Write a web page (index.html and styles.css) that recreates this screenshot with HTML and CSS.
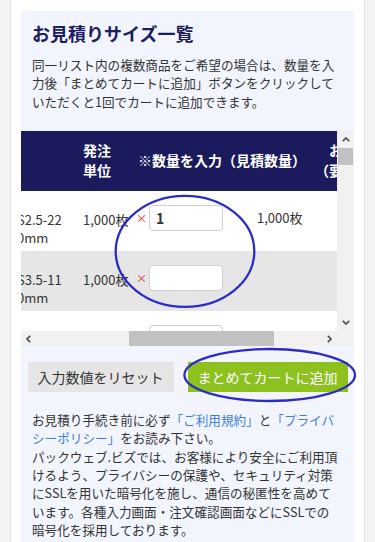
FILE: index.html
```html
<!DOCTYPE html>
<html lang="ja">
<head>
<meta charset="utf-8">
<title>お見積りサイズ一覧</title>
<link rel="stylesheet" href="styles.css">
</head>
<body>
<div class="page">
  <section class="panel">
    <h2 class="title txt">お見積りサイズ一覧</h2>
    <p class="lead txt">同一リスト内の複数商品をご希望の場合は、数量を入力後「まとめてカートに追加」ボタンをクリックしていただくと1回でカートに追加できます。</p>

    <div class="table-box">
      <div class="viewport">
        <table class="sizes">
          <colgroup>
            <col class="c-size"><col class="c-unit"><col class="c-qty"><col class="c-more">
          </colgroup>
          <thead>
            <tr>
              <th></th>
              <th>発注<br>単位</th>
              <th class="h-qty">※数量を入力（見積数量）</th>
              <th class="h-more">お届け<br>（要確認）</th>
            </tr>
          </thead>
          <tbody>
            <tr>
              <td class="size">S2.5-220mm</td>
              <td class="unit">1,000枚</td>
              <td class="qty"><div class="qty-in"><span class="times">×</span><input class="num" type="text" value="1"><span class="total">1,000枚</span></div></td>
              <td></td>
            </tr>
            <tr class="alt">
              <td class="size">S3.5-110mm</td>
              <td class="unit">1,000枚</td>
              <td class="qty"><div class="qty-in"><span class="times">×</span><input class="num" type="text" value=""></div></td>
              <td></td>
            </tr>
            <tr>
              <td class="size"></td>
              <td class="unit"></td>
              <td class="qty"><div class="qty-in"><span class="times">×</span><input class="num" type="text" value=""></div></td>
              <td></td>
            </tr>
          </tbody>
        </table>
      </div>
      <div class="vbar">
        <div class="sb-btn"><svg width="8" height="5" viewBox="0 0 8 5"><polyline points="0.8,4.2 4,1 7.2,4.2" /></svg></div>
        <div class="vthumb"></div>
        <div class="sb-fill"></div>
        <div class="sb-btn"><svg width="8" height="5" viewBox="0 0 8 5"><polyline points="0.8,0.8 4,4 7.2,0.8" /></svg></div>
      </div>
      <div class="hbar">
        <div class="sb-btn h"><svg width="5" height="8" viewBox="0 0 5 8"><polyline points="4.2,0.8 1,4 4.2,7.2" /></svg></div>
        <div class="hthumb"></div>
        <div class="sb-fill"></div>
        <div class="sb-btn h"><svg width="5" height="8" viewBox="0 0 5 8"><polyline points="0.8,0.8 4,4 0.8,7.2" /></svg></div>
      </div>
      <div class="corner"></div>
    </div>

    <div class="actions">
      <button class="btn reset" type="button">入力数値をリセット</button>
      <button class="btn add" type="button">まとめてカートに追加</button>
    </div>

    <p class="note txt">お見積り手続き前に必ず<a href="#">「ご利用規約」</a>と<a href="#">「プライバシーポリシー」</a>をお読み下さい。<br>パックウェブ.ビズでは、お客様により安全にご利用頂けるよう、プライバシーの保護や、セキュリティ対策にSSLを用いた暗号化を施し、通信の秘匿性を高めています。各種入力画面・注文確認画面などにSSLでの暗号化を採用しております。</p>
  </section>
</div>

<svg class="marks" width="375" height="542" viewBox="0 0 375 542">
  <ellipse cx="185" cy="251.3" rx="69.3" ry="55.5" />
  <ellipse cx="269.7" cy="375" rx="85.3" ry="26" />
</svg>
</body>
</html>
```

FILE: styles.css
```css
html, body {
  margin: 0;
  padding: 0;
}

body {
  background: #f4f4f4;
  font-family: "Noto Sans CJK JP", "Noto Sans", sans-serif;
  color: #333;
  position: relative;
  height: 542px;
  overflow: hidden;
}

.page {
  margin: 0 10px;
  height: 542px;
  box-sizing: border-box;
  padding: 11px 10px 0;
  background: #fff;
  border-left: 1px solid #e3e3e3;
  border-right: 1px solid #e3e3e3;
  overflow: hidden;
}

.panel {
  background: #f2f5fe;
  height: 531px;
  padding-top: 9px;
  box-sizing: border-box;
  overflow: hidden;
}

.txt {
  padding: 0 15px 0 11px;
}

.title {
  margin: 0;
  font-size: 18px;
  line-height: 26px;
  font-weight: bold;
  color: #1d1c5c;
}

.lead {
  margin: 10px 0 0;
  font-size: 12.6px;
  line-height: 18.4px;
}

/* table with scroll bars */
.table-box {
  margin-top: 19.8px;
  display: grid;
  grid-template-columns: 1fr 17px;
  grid-template-rows: 200px 15px;
  background: #f1f1f1;
}

.viewport {
  overflow: hidden;
  background: #fff;
}

.sizes {
  table-layout: fixed;
  border-collapse: collapse;
  width: 368px;
  margin-left: -4px;
}

.c-size { width: 66px; }
.c-unit { width: 53px; }
.c-qty { width: 179px; }
.c-more { width: 70px; }

.sizes tr {
  height: 60px;
}

.sizes th {
  background: #1b1a5c;
  color: #fff;
  font-size: 14px;
  font-weight: bold;
  line-height: 19.6px;
  text-align: left;
  vertical-align: middle;
  padding: 0;
  white-space: nowrap;
}

.sizes th.h-qty {
  padding-left: 2px;
}

.sizes th.h-more {
  text-align: center;
}

.sizes td {
  padding: 20px 0 0;
  vertical-align: top;
  font-size: 13px;
  line-height: 18px;
  background: #fff;
}

.sizes tr.alt td {
  background: #e6e6e6;
}

.sizes td.size {
  padding-right: 20px;
  word-break: break-all;
}

.sizes td.unit {
  white-space: nowrap;
}

.sizes td.qty {
  padding-top: 14px;
}

.qty-in {
  display: flex;
  align-items: center;
  height: 26px;
}

.times {
  width: 10px;
  text-align: center;
  color: #c9302c;
  font-size: 11px;
  line-height: 1;
}

.num {
  margin-left: 3px;
  width: 74px;
  height: 26px;
  box-sizing: border-box;
  border: 1px solid #cfcfcf;
  border-radius: 4px;
  background: #fff;
  padding: 0 6px;
  font-family: inherit;
  font-size: 14px;
  font-weight: bold;
  color: #333;
  outline: none;
}

.total {
  margin-left: 34px;
  white-space: nowrap;
  font-size: 13px;
}

.vbar {
  display: flex;
  flex-direction: column;
  background: #f1f1f1;
}

.hbar {
  display: flex;
  background: #f1f1f1;
}

.sb-btn {
  flex: none;
  width: 17px;
  height: 17px;
  display: flex;
  align-items: center;
  justify-content: center;
}

.sb-btn.h {
  width: 15px;
  height: 15px;
}

.sb-btn polyline {
  fill: none;
  stroke: #505050;
  stroke-width: 1.7;
}

.vthumb {
  flex: none;
  height: 17px;
  margin: 0 1px;
  background: #c1c1c1;
}

.hthumb {
  flex: none;
  width: 145px;
  margin-left: 93px;
  background: #c1c1c1;
}

.sb-fill {
  flex: 1;
}

.corner {
  background: #f1f1f1;
}

/* buttons */
.actions {
  display: flex;
  justify-content: center;
  gap: 14px;
  margin-top: 16px;
}

.btn {
  height: 30px;
  border: 0;
  border-radius: 0;
  padding: 0;
  font-family: inherit;
  font-size: 14px;
  line-height: 30px;
  cursor: pointer;
}

.btn.reset {
  width: 146px;
  background: #e5e5e5;
  color: #333;
}

.btn.add {
  width: 160px;
  background: #8cc11f;
  color: #fff;
}

.note {
  margin: 18.8px 0 0;
  font-size: 12.6px;
  line-height: 18.4px;
}

.note a {
  color: #3d7fd6;
  text-decoration: none;
}

/* hand-drawn annotation circles */
.marks {
  position: absolute;
  left: 0;
  top: 0;
  pointer-events: none;
}

.marks ellipse {
  fill: none;
  stroke: #2c2cc4;
  stroke-width: 2.3;
}
```
